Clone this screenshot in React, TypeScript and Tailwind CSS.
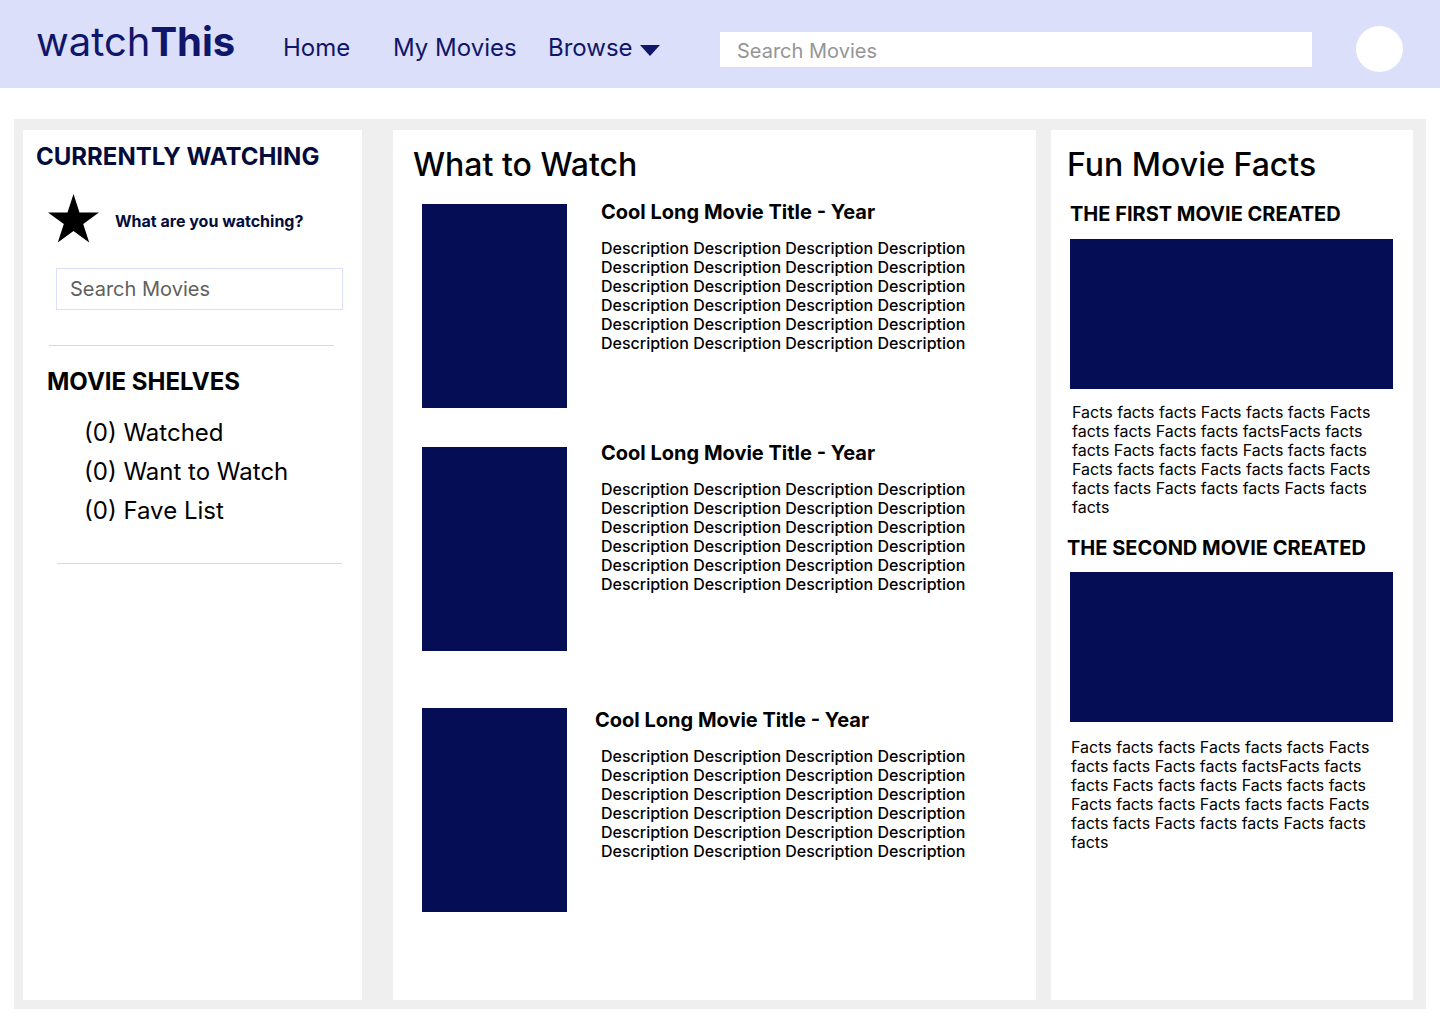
const DESCRIPTION = Array(24).fill("Description").join(" ");

const FACTS =
  "Facts facts facts Facts facts facts Facts facts facts Facts facts factsFacts facts facts Facts facts facts Facts facts facts Facts facts facts Facts facts facts Facts facts facts Facts facts facts Facts facts facts";

const MOVIES = [
  { id: 1, row: "mt-[15px]", poster: "mt-1", heading: "pl-1.5" },
  { id: 2, row: "mt-[33px]", poster: "mt-1.5", heading: "pl-1.5" },
  { id: 3, row: "mt-[57px]", poster: "", heading: "" },
];

const SHELVES = ["Watched", "Want to Watch", "Fave List"];

function Header() {
  return (
    <header className="flex h-[88px] items-center bg-[#dbdff9] pr-[37px] pl-9 text-[#10166a]">
      <a href="#" className="w-[247px] shrink-0 pb-1 text-[40px] leading-12">
        watch<span className="font-bold">This</span>
      </a>
      <nav className="flex w-[437px] shrink-0 items-center pt-2 text-2xl leading-7">
        <a href="#" className="w-[110px]">Home</a>
        <a href="#" className="w-[155px]">My Movies</a>
        <button type="button" className="flex items-center gap-[7px]">
          Browse
          <svg width="20" height="11" viewBox="0 0 20 11" fill="currentColor" className="mt-1" aria-hidden="true">
            <path d="M0 0H20L10 11Z" />
          </svg>
        </button>
      </nav>
      <input
        type="search"
        aria-label="Search movies"
        placeholder="Search Movies"
        className="mt-[11px] h-[35px] min-w-0 grow bg-white px-[17px] pt-0.5 text-xl text-black outline-none placeholder:text-[#959595]"
      />
      <button type="button" aria-label="Account" className="mt-2.5 ml-11 h-[46px] w-[47px] shrink-0 rounded-[50%] bg-white" />
    </header>
  );
}

function Sidebar() {
  return (
    <aside className="bg-white px-[13px] pt-[13px]">
      <h2 className="text-2xl leading-7 font-bold text-[#030c3c]">CURRENTLY WATCHING</h2>
      <div className="mt-[23px] flex items-center gap-4 pl-3">
        <svg width="51" height="49" viewBox="0 0 51 49" className="shrink-0" aria-hidden="true">
          <path d="M25.5 0L31.5 18.5H51L35.2 30L41.2 48.5L25.5 37L9.8 48.5L15.8 30L0 18.5H19.5Z" />
        </svg>
        <label htmlFor="watching" className="pt-1 text-base leading-5 font-bold text-[#030c3c]">
          What are you watching?
        </label>
      </div>
      <div className="pr-1.5 pl-5">
        <input
          id="watching"
          type="search"
          placeholder="Search Movies"
          className="mt-[25px] h-[42px] w-full border border-[#dbdff9] px-[13px] text-xl outline-none placeholder:text-[#606060]"
        />
      </div>
      <hr className="mt-[35px] mr-[15px] ml-[13px] border-[#d9d9d9]" />
      <h2 className="mt-[22px] pl-[11px] text-2xl leading-7 font-bold">MOVIE SHELVES</h2>
      <ul className="mt-[17px] pl-12 text-2xl leading-[39px]">
        {SHELVES.map((name) => (
          <li key={name}>
            <a href="#">(0) {name}</a>
          </li>
        ))}
      </ul>
      <hr className="mt-[33px] mr-[7px] ml-[21px] border-[#d9d9d9]" />
    </aside>
  );
}

function Recommendations() {
  return (
    <section className="bg-white px-5 pt-[15px]">
      <h1 className="text-[32px] leading-10 font-medium">What to Watch</h1>
      {MOVIES.map((movie) => (
        <article key={movie.id} className={`flex items-start gap-7 pl-[9px] ${movie.row}`}>
          <div className={`h-[204px] w-[145px] shrink-0 bg-[#050d55] ${movie.poster}`} />
          <div>
            <h2 className={`text-xl leading-6 font-bold ${movie.heading}`}>Cool Long Movie Title - Year</h2>
            <p className="mt-[15px] max-w-[380px] pl-1.5 text-base leading-[19px] font-medium">{DESCRIPTION}</p>
          </div>
        </article>
      ))}
    </section>
  );
}

function Facts() {
  return (
    <section className="bg-white pt-[15px] pr-5 pl-4">
      <h1 className="text-[32px] leading-10 font-medium">Fun Movie Facts</h1>
      <article className="mt-[17px] pl-[3px]">
        <h2 className="text-xl leading-6 font-bold">THE FIRST MOVIE CREATED</h2>
        <div className="mt-[13px] h-[150px] bg-[#050d55]" />
        <p className="mt-3.5 pr-3 pl-0.5 text-base leading-[19px]">{FACTS}</p>
      </article>
      <article className="mt-[19px]">
        <h2 className="text-xl leading-6 font-bold">THE SECOND MOVIE CREATED</h2>
        <div className="mt-3 ml-[3px] h-[150px] bg-[#050d55]" />
        <p className="mt-4 pr-3 pl-1 text-base leading-[19px]">{FACTS}</p>
      </article>
    </section>
  );
}

export default function App() {
  return (
    <div className="flex min-h-screen flex-col bg-white pb-[15px] font-['Inter',sans-serif] text-black">
      <Header />
      <main className="mx-3.5 mt-[31px] grid grow grid-cols-[339px_31px_minmax(0,1fr)_15px_362px] bg-[#efefef] pt-[11px] pr-[13px] pb-[9px] pl-[9px]">
        <Sidebar />
        <div />
        <Recommendations />
        <div />
        <Facts />
      </main>
    </div>
  );
}
